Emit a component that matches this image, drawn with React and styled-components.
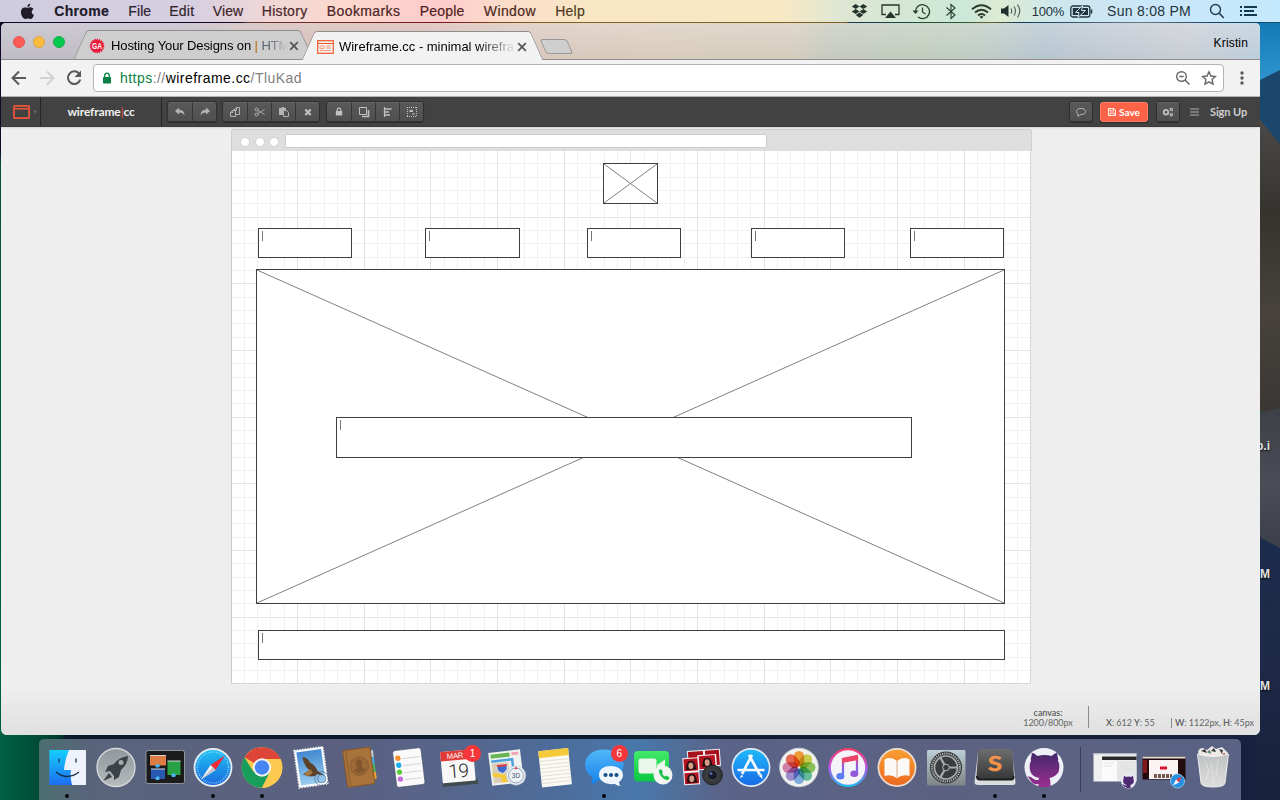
import React from "react";
import styled, { createGlobalStyle, css } from "styled-components";

const Global = createGlobalStyle`
  * { box-sizing: border-box; }
  html, body { margin: 0; padding: 0; }
  body { width: 1280px; height: 800px; overflow: hidden; }
  svg { display: block; flex: none; }
`;

const helvetica = `"Liberation Sans", Arial, sans-serif`;
const lato = `Lato, sans-serif`;

/* ---------- desktop ---------- */
const Desktop = styled.div`
  position: relative;
  width: 1280px;
  height: 800px;
  overflow: hidden;
  display: flex;
  flex-direction: column;
  font-family: ${helvetica};
  background:
    linear-gradient(90deg, #006042 0, #004b35 40px, #003a2c 60px, rgba(13, 26, 45, 0) 66px) 0 735px / 100% 65px no-repeat,
    linear-gradient(90deg, #0c1929 0, #0d1a2c 600px, #17213d 1200px, #17213d 1280px) 0 735px / 100% 65px no-repeat,
    linear-gradient(180deg, #11082a 0, #11082a 150px, #00523a 165px, #006242 735px);
`;

const Wallpaper = styled.svg`
  position: absolute;
  right: 0;
  top: 22px;
`;

const DesktopLabel = styled.span`
  position: absolute;
  right: ${(p) => p.$right}px;
  top: ${(p) => p.$top}px;
  font-size: 12px;
  line-height: 14px;
  font-weight: bold;
  color: #e2e2e2;
  text-shadow: 0 1px 2px #000;
`;

/* ---------- menu bar ---------- */
const MenuBar = styled.header`
  position: relative;
  height: 23px;
  flex: none;
  display: flex;
  align-items: center;
  justify-content: space-between;
  padding: 0 22px 0 20px;
  color: #1e1b2a;
  border-bottom: 1px solid;
  border-image: linear-gradient(90deg, #11082a 0, #11082a 240px, #6c352c 250px, #7f1418 440px, #80601c 530px, #80601c 845px, #0b3a5a 850px, #245c2c 960px, #6a682a 990px, #0b3a64 1020px, #6c7a88 1140px, #12496b 1210px, #12496b 1280px) 1;
  background: linear-gradient(90deg, #cfccdf 0, #d6cfe0 190px, #f0d7d6 270px, #fbd9cd 340px, #fecbcb 440px, #fbdccb 500px, #f9e6c5 580px, #f8e9c4 780px, #dfe6d3 840px, #d2e8d5 920px, #cbe8d9 965px, #dcebd2 1000px, #cde7ee 1060px, #cbe6f8 1150px, #c5e9fd 1280px);
`;
const MenuLeft = styled.nav`
  display: flex;
  align-items: center;
  gap: 18.5px;
  font-size: 14px;
`;
const AppleMark = styled.svg`
  margin-right: 0.8px;
`;
const MenuItem = styled.span`
  width: ${(p) => p.$w}px;
  white-space: nowrap;
  font-weight: ${(p) => (p.$bold ? 700 : 400)};
  color: ${(p) => p.$c};
  letter-spacing: ${(p) => p.$ls || 0}px;
  -webkit-text-stroke: 0.2px currentColor;
`;
const MenuRight = styled.div`
  display: flex;
  align-items: center;
  color: #22333a;
`;
const StatusSlot = styled.span`
  margin-left: ${(p) => p.$gap}px;
  white-space: nowrap;
  font-size: ${(p) => p.$size || 14}px;
  letter-spacing: ${(p) => p.$ls || 0}px;
`;

/* ---------- browser window ---------- */
const Window = styled.main`
  position: relative;
  width: 1259px;
  height: 712px;
  margin-left: 1px;
  flex: none;
  display: flex;
  flex-direction: column;
  border-radius: 5px 5px 6px 6px;
  overflow: hidden;
  background: #eeeeee;
`;
const TabStrip = styled.div`
  height: 37px;
  flex: none;
  display: flex;
  align-items: flex-end;
  border-bottom: 1px solid #908e8e;
  background:
    linear-gradient(180deg, rgba(255, 255, 255, 0.18), rgba(120, 120, 120, 0.04)),
    linear-gradient(95deg, #c2bfca 0, #c4bec9 180px, #d6c0bc 270px, #dcbdb8 420px, #dcc9c1 500px, #dccfbf 640px, #d8cfc0 790px, #c9cdc3 830px, #c4d0c1 920px, #c3cfc8 980px, #bac9d3 1040px, #c7cdd6 1130px, #ccd1d7 1180px, #bfd1df 1259px);
`;
const Lights = styled.div`
  display: flex;
  gap: 8px;
  padding: 0 0 11px 12px;
  width: 72px;
`;
const Light = styled.i`
  width: 12px;
  height: 12px;
  border-radius: 50%;
  background: ${(p) => p.$c};
  border: 1px solid ${(p) => p.$b};
`;
const Tab = styled.div`
  position: relative;
  width: ${(p) => p.$w || 241}px;
  height: 29px;
  margin-left: ${(p) => p.$ml || 0}px;
  margin-bottom: ${(p) => (p.$active ? -1 : 0)}px;
  z-index: ${(p) => (p.$active ? 2 : 1)};
  display: flex;
  align-items: center;
  padding: 2px ${(p) => (p.$active ? 17 : 15)}px 0 16px;
  &::before, &::after {
    content: "";
    position: absolute;
    z-index: -1;
    top: 0;
    bottom: 0;
    background: ${(p) => (p.$active ? "#f2f2f2" : "#cfcecf")};
    border: 0 solid #8f8d8d;
    border-top-width: 1px;
  }
  &::before {
    left: 6.5px;
    right: 50%;
    border-left-width: 1px;
    border-top-left-radius: 3px;
    transform: skewX(-24deg);
  }
  &::after {
    left: 45%;
    right: 6.5px;
    border-right-width: 1px;
    border-top-right-radius: 3px;
    transform: skewX(24deg);
  }
`;
const TabTitle = styled.span`
  flex: 1;
  margin-left: ${(p) => p.$ml}px;
  font-size: 13px;
  letter-spacing: ${(p) => p.$ls}px;
  line-height: 18px;
  white-space: nowrap;
  color: #000;
  mask-image: linear-gradient(90deg, #000 ${(p) => p.$fade}px, transparent 177px);
`;
const Pipe = styled.span`
  color: #b56a10;
`;
const Fade = styled.span`
  color: #5d6572;
`;
const NewTab = styled.div`
  width: 27px;
  height: 15px;
  margin: 0 0 5px -1px;
  transform: skewX(24deg);
  border: 1px solid #9a9896;
  border-radius: 3px;
  background: #cfcfcf;
`;
const Profile = styled.span`
  margin: 0 12px 9px auto;
  font-size: 12px;
  letter-spacing: 0.15px;
  line-height: 14px;
  color: #000;
`;
const NavBar = styled.div`
  height: 37px;
  flex: none;
  display: flex;
  align-items: center;
  background: #f2f2f2;
  border-bottom: 1px solid #b4b4b4;
  padding: 0 11px 0 9px;
`;
const NavIcons = styled.div`
  display: flex;
  gap: 9.7px;
  width: 83px;
`;
const Omnibox = styled.div`
  flex: 1;
  height: 28px;
  border: 1px solid #b3b3b3;
  border-radius: 4px;
  background: #fff;
  display: flex;
  align-items: center;
  padding: 0 6px 0 8px;
`;
const Url = styled.span`
  flex: 1;
  margin-left: 8px;
  font-size: 14px;
  letter-spacing: 0.46px;
  color: #808080;
`;
const Secure = styled.span`
  color: #0b8043;
`;
const Host = styled.span`
  color: #000;
`;
const NavEnd = styled.div`
  display: flex;
  margin-left: 9px;
`;

/* ---------- app toolbar ---------- */
const AppBar = styled.div`
  height: 30px;
  flex: none;
  display: flex;
  align-items: center;
  background: #424242;
  border-bottom: 1px solid #383838;
  font-family: ${lato};
`;
const LogoCell = styled.div`
  width: 40px;
  height: 29px;
  display: flex;
  align-items: center;
  gap: 4px;
  padding-left: 12px;
  border-right: 1px solid #252525;
`;
const Brand = styled.div`
  width: 121px;
  height: 29px;
  line-height: 30px;
  text-align: center;
  font-size: 12px;
  font-weight: 700;
  letter-spacing: -0.15px;
  color: #f0f0f0;
  border-right: 1px solid #252525;
`;
const BrandBar = styled.span`
  color: #e0533b;
  font-weight: 400;
`;
const Group = styled.div`
  display: flex;
  margin-left: ${(p) => p.$ml ?? 6}px;
  height: 21px;
  border: 1px solid #303030;
  border-radius: 3px;
  box-shadow: 0 1px 1px #2d2d2d;
  overflow: hidden;
`;
const ToolButton = styled.div`
  width: ${(p) => p.$w || 24}px;
  display: flex;
  align-items: center;
  justify-content: center;
  background: linear-gradient(#585858, #4f4f4f);
  border-top: 1px solid #646464;
  & + & {
    border-left: 1px solid #363636;
  }
`;
const AppRight = styled.div`
  margin-left: auto;
  padding-right: 13px;
  display: flex;
  align-items: center;
`;
const Save = styled.div`
  width: 48px;
  height: 20px;
  margin: 0 2px 0 7px;
  border-radius: 3px;
  background: #ff6347;
  border: 1px solid #ff8068;
  box-shadow: 0 1px 1px #2b2b2b;
  color: #fff;
  font-size: 10px;
  font-weight: 700;
  display: flex;
  align-items: center;
  justify-content: center;
  gap: 3px;
`;
const SignUp = styled.span`
  margin-left: 11px;
  font-size: 11px;
  letter-spacing: -0.1px;
  color: #cfcfcf;
  font-weight: 700;
  width: 37px;
  white-space: nowrap;
`;

/* ---------- workspace ---------- */
const Workspace = styled.section`
  flex: 1;
  display: flex;
  flex-direction: column;
  background: linear-gradient(180deg, #d5d5d5 0, #eeeeee 2px, #eeeeee 560px, #e0e0e0 608px);
  padding-top: 2px;
`;
const Sheet = styled.div`
  width: 801px;
  height: 555px;
  margin-left: 230px;
  flex: none;
`;
const SheetHeader = styled.div`
  height: 22px;
  display: flex;
  align-items: center;
  padding: 1px 0 0 8px;
  border: 1px solid #cdcdcd;
  border-bottom: 0;
  border-radius: 3px 3px 0 0;
  background: #dedede;
`;
const Circle = styled.i`
  width: 10px;
  height: 10px;
  margin-top: 1px;
  border-radius: 50%;
  margin-right: 4.6px;
  background: #fff;
  border: 1px solid #d2d2d2;
`;
const Address = styled.div`
  width: 482px;
  height: 14px;
  margin-left: 1px;
  border: 1px solid #cbcbcb;
  border-radius: 2px;
  background: #fff;
`;
const Paper = styled.div`
  position: relative;
  height: 533px;
  width: 800px;
  border: 1px solid #d6d6d6;
  border-top: 0;
  border-left-color: #cacaca;
  background:
    repeating-linear-gradient(90deg, transparent 0, transparent 65.1px, #e2e2e2 65.1px, #e2e2e2 66.1px, transparent 66.1px, transparent 66.667px),
    repeating-linear-gradient(180deg, transparent 0, transparent 65.6px, #e6e6e6 65.6px, #e6e6e6 66.6px, transparent 66.6px, transparent 66.667px),
    repeating-linear-gradient(90deg, transparent 0, transparent 11.8px, #f1f1f1 11.8px, #f1f1f1 12.8px, transparent 12.8px, transparent 13.333px),
    repeating-linear-gradient(180deg, transparent 0, transparent 12.3px, #f1f1f1 12.3px, #f1f1f1 13.3px, transparent 13.3px, transparent 13.333px),
    #fff;
`;
const placed = css`
  position: absolute;
  left: ${(p) => p.$x}px;
  top: ${(p) => p.$y}px;
  width: ${(p) => p.$w}px;
  height: ${(p) => p.$h}px;
  border: 1px solid #3f3f3f;
  background: #fff;
`;
const FieldBox = styled.div`
  ${placed}
  padding: 2px 0 0 3px;
  &::before {
    content: "";
    display: block;
    width: 1px;
    height: 10px;
    background: #777;
  }
`;
const ImageBox = styled.div`
  ${placed}
`;
const Footer = styled.footer`
  flex: 1;
  display: flex;
  justify-content: flex-end;
  align-items: flex-end;
  padding: 0 8px 7px 0;
  font-family: ${lato};
  font-size: 9px;
  letter-spacing: -0.05px;
  line-height: 10px;
  color: #666;
  white-space: nowrap;
`;
const Stat = styled.div`
  width: ${(p) => p.$w}px;
  text-align: ${(p) => p.$align || "left"};
`;
const Rule = styled.i`
  width: 1px;
  height: ${(p) => p.$h}px;
  margin: ${(p) => p.$m};
  background: #8b8b8b;
`;
const Strong = styled.span`
  font-weight: 600;
  color: #5c5c5c;
`;

/* ---------- dock ---------- */
const Dock = styled.nav`
  position: relative;
  width: 1202px;
  height: 61px;
  margin: 4px 0 0 39px;
  padding-left: 3.4px;
  flex: none;
  display: flex;
  border-radius: 5px 5px 0 0;
  background: linear-gradient(90deg, #4a6f6f 0, #59647c 50px, #5b6080 300px, #57658a 400px, #4e6c9a 510px, #4878ab 600px, #5a6488 680px, #5c6181 900px, #5a6384 1202px);
`;
const DockItem = styled.div`
  position: relative;
  width: 48.85px;
  height: 61px;
  flex: none;
  display: flex;
  flex-direction: column;
  align-items: center;
  padding-top: 4px;
  &::after {
    content: "";
    display: ${(p) => (p.$running ? "block" : "none")};
    width: 4px;
    height: 4px;
    margin-top: 3px;
    border-radius: 50%;
    background: #05060c;
  }
`;
const DockRule = styled.i`
  width: 1px;
  height: 45px;
  margin: 8px 10px 0 11.5px;
  background: #35405f;
`;
const Badge = styled.span`
  position: absolute;
  left: ${(p) => p.$x}px;
  top: 6px;
  width: 17px;
  height: 17px;
  border-radius: 50%;
  background: #f5373b;
  color: #fff;
  font-size: 10px;
  line-height: 17px;
  text-align: center;
`;

const Icon = ({ w = 16, h, vb, children, ...rest }) => (
  <svg width={w} height={h || w} viewBox={vb || `0 0 ${w} ${h || w}`} fill="none" {...rest}>
    {children}
  </svg>
);

const CAT =
  "M-13 -14C-13 -18 -12 -18 -7 -14Q0 -16 7 -14C12 -18 13 -18 13 -14Q14 -11 13.500 -9Q16 -5 14 2Q11 7 5 8Q6 9 6 17H-6V14C-13 16 -14 8 -17 7C-14 5 -11 11 -6 10Q-6 8 -5 8Q-12 7 -14 2Q-16 -5 -13.500 -9Q-14 -12 -13 -14Z";

const icons = {
  finder: (
    <>
      <rect x="6.300" y="7" width="36.700" height="35" fill="url(#gFinder)" />
      <path d="M43 7H26Q22 16 21 27H28Q27 34 29 42H43Z" fill="#eef2fa" />
      <path d="M16 15.500V19.500M33 15.500V19.500" stroke="#173753" strokeWidth="1.300" />
      <path d="M13 29Q24 38 36 29" stroke="#152c44" strokeWidth="1.300" />
    </>
  ),
  launch: (
    <>
      <circle cx="24" cy="24.500" r="19" fill="url(#gGray)" stroke="#d8dcde" strokeWidth="1.300" />
      <path d="M36 13Q27 14 22 21L16 23L13 29L18 28L22 33L22 37L27 34L29 27Q36 21 36 13Z" fill="#3d4246" />
      <circle cx="29" cy="19.500" r="2.500" fill="#a4a9ac" />
      <path d="M17 30L11 38L20 34" fill="#3d4246" />
    </>
  ),
  mission: (
    <>
      <rect x="5" y="7.500" width="38.500" height="33" rx="2" fill="#1b1b1c" stroke="#8e97a0" />
      <rect x="9" y="12.500" width="16" height="10" fill="#de7d43" />
      <rect x="10" y="26" width="14" height="10" fill="#2858b1" />
      <rect x="26.500" y="18" width="13" height="14" fill="#28a146" />
      <path d="M9 12.500H25M10 26H24M26.500 18H39.500" stroke="#d3d6d8" />
      <path d="M17 20.500l2 2-1 2h-3l-1-2zM17 33l2 2-1 2h-3l-1-2zM33 30l2 2-1 2h-3l-1-2z" fill="#4bb3f5" />
    </>
  ),
  safari: (
    <>
      <circle cx="24" cy="24.500" r="18.500" fill="url(#gSafari)" stroke="#e5eaf0" strokeWidth="1.800" />
      <circle cx="24" cy="24.500" r="15.500" stroke="#a9e2ff" strokeWidth="1.600" strokeDasharray=".6 1.400" />
      <path d="M36 12.500L21.500 22L26.500 27Z" fill="#f22a36" />
      <path d="M12 36.500L21.500 22L26.500 27Z" fill="#f4f4f4" />
      <path d="M26.500 27L24 24.500L12 36.500Z" fill="#c0c4ca" />
    </>
  ),
  chrome: (
    <>
      <circle cx="24" cy="24.500" r="20.300" fill="#fdc94e" />
      <path d="M24 24.500L6.420 14.350A20.300 20.300 0 0 1 42.500 16H24Z" fill="#dc4537" />
      <path d="M6.420 14.350A20.300 20.300 0 0 0 24 44.800L32 29L24 24L15 28Z" fill="#169e5a" />
      <path d="M42.500 16A20.300 20.300 0 0 1 24 44.800L32 29L31 17Z" fill="#fdc94e" />
      <circle cx="24" cy="24.500" r="9.200" fill="#f1f1f1" />
      <circle cx="24" cy="24.500" r="7.200" fill="#4684f2" />
    </>
  ),
  mail: (
    <g transform="rotate(-8 24 24)">
      <rect x="9.500" y="5.500" width="29" height="37.500" fill="#fff" stroke="#f0f3f5" strokeWidth="1.700" strokeDasharray="1.400 1.300" />
      <rect x="11.500" y="7.500" width="25" height="33.500" fill="url(#gMail)" />
      <path d="M17 13Q22 14 24 20Q28 22 30 29L36 34L29 32Q24 36 15 30L22 27Q17 22 17 13Z" fill="#5c4129" />
      <path d="M16 30L23 26L25 30L20 33Z" fill="#a37743" />
      <circle cx="33" cy="37" r="7" stroke="#3b506f" strokeWidth=".9" opacity=".6" />
      <circle cx="33" cy="37" r="4" stroke="#3b506f" strokeWidth=".9" opacity=".6" />
    </g>
  ),
  contacts: (
    <g transform="rotate(-8 24 24)">
      <path d="M34 9H39V16H34Z" fill="#c4d1dc" />
      <path d="M34 16H39V23H34Z" fill="#41aede" />
      <path d="M34 23H39V31H34Z" fill="#4bb75c" />
      <path d="M34 31H39V38H34Z" fill="#efa231" />
      <rect x="9" y="5.500" width="27.500" height="37" rx="1.500" fill="#a8733a" stroke="#87572a" />
      <path d="M12 6V42" stroke="#8c5e32" />
      <circle cx="23.500" cy="23" r="9" fill="#9c6a37" stroke="#8a5c2e" />
      <path d="M23.500 16a3.500 4 0 0 1 2 7q0 2 4 4q-6 6-12 0q4-2 4-4a3.500 4 0 0 1 2-7" fill="#83562d" />
    </g>
  ),
  reminders: (
    <g transform="rotate(-7 24 24)">
      <rect x="9.500" y="6" width="28.500" height="37" rx="2.500" fill="#fafafa" stroke="#3f4c64" strokeWidth=".6" />
      <path d="M18 15H36M18 22H36M18 29H36M18 36H36" stroke="#d6d6d6" />
      <circle cx="14" cy="14" r="2.700" fill="#f6902b" />
      <circle cx="14" cy="21" r="2.700" fill="#19adf5" />
      <circle cx="14" cy="28" r="2.700" fill="#5acb3c" />
      <circle cx="14" cy="35" r="2.700" fill="#c56ddd" />
    </g>
  ),
  calendar: (
    <g transform="rotate(-5 24 24)">
      <path d="M8 37H42L43 42.500H7Z" fill="#404b50" />
      <rect x="7.500" y="7.500" width="33" height="31.500" rx="1" fill="#f8f8f8" />
      <path d="M7.500 8.500Q7.500 7.500 8.500 7.500H39.500Q40.500 7.500 40.500 8.500V17H7.500Z" fill="#e23b37" />
      <text x="22" y="15" fill="#fff" fontSize="7.500" textAnchor="middle" fontFamily="Liberation Sans, sans-serif">MAR</text>
      <text x="24" y="34.500" fill="#292929" fontSize="19" fontWeight="300" textAnchor="middle" letterSpacing="-.6" fontFamily="Roboto, sans-serif">19</text>
    </g>
  ),
  maps: (
    <>
      <g transform="rotate(-7 24 24)">
        <rect x="8" y="8" width="32" height="33" fill="#f0f3ed" />
        <path d="M10 10H29V14H10Z" fill="#68b455" />
        <path d="M31 10H38V13H31Z" fill="#efa9b6" />
        <path d="M10 19H27V39H10Z" fill="#d9cfb8" />
        <path d="M10 17H31V33" stroke="#4ea1df" strokeWidth="2.500" />
        <path d="M10 28L24 32L25 39H18V34L10 32Z" fill="#f7c939" />
        <path d="M15 21H25V26Q23 29 20 30Q17 29 15 26Z" fill="#3c6bcd" stroke="#fff" strokeWidth=".6" />
        <path d="M15 22H25" stroke="#e63c36" strokeWidth="2" />
      </g>
      <circle cx="34" cy="32.500" r="9.700" fill="#edf0f4" stroke="#bac2cc" strokeWidth=".6" />
      <circle cx="34" cy="32.500" r="7.500" stroke="#7d93a8" strokeWidth=".8" />
      <path d="M34 23.500l1.500 2.500h-3z" fill="#db302b" />
      <text x="34" y="35" fill="#44566c" fontSize="6.500" textAnchor="middle" fontFamily="Liberation Sans, sans-serif">3D</text>
    </>
  ),
  notes: (
    <g transform="rotate(-6 24 24)">
      <rect x="9" y="6.500" width="30" height="36.500" fill="#faf9f3" />
      <path d="M9 6.500H39V13.500H9Z" fill="#f6c93b" />
      <path d="M9 17H39M9 20.700H39M9 24.400H39M9 28.100H39M9 31.800H39M9 35.500H39M9 39.200H39" stroke="#d9d7cc" strokeWidth=".7" />
    </g>
  ),
  messages: (
    <>
      <path d="M24 6.500C35 6.500 43.500 13 43.500 22S35 38 24 38Q20 38 18 37Q15 41 11 42Q13 38 12 34Q5 29 5 22C5 13 13 6.500 24 6.500Z" fill="url(#gBlue)" />
      <path d="M31 23C38 23 43 27 43 32Q43 36 39 39Q39 42 41 43Q37 43 35 41C26 42 19 38 19 32S24 23 31 23Z" fill="#edf6fc" />
      <circle cx="25.500" cy="32" r="2.100" fill="#194f88" />
      <circle cx="31" cy="32" r="2.100" fill="#194f88" />
      <circle cx="36.500" cy="32" r="2.100" fill="#194f88" />
    </>
  ),
  facetime: (
    <>
      <rect x="5" y="8" width="35" height="30.500" rx="4" fill="url(#gGreen)" />
      <rect x="9.500" y="15.500" width="18" height="15" rx="2.500" fill="#eaf6ea" />
      <path d="M28 22L36 16.500V30L28 25Z" fill="#eaf6ea" />
      <circle cx="34" cy="32" r="9.500" fill="#f3f5f3" />
      <path d="M30 27l2-1 2 3-1 1.500q1 2 3 3l1.500-1 3 2-1 2.200q-3 1-6-2-4-4-3.500-7.700Z" fill="#1bc24b" />
    </>
  ),
  booth: (
    <>
      <g transform="rotate(-4 24 24)">
        <path d="M10 7H43V24H10Z" fill="#f2f2f2" />
        <path d="M11 8H26V20H11ZM28 8H42V23H28Z" fill="#a60f1c" />
        <path d="M5 14H21V41H5Z" fill="#f4f4f4" />
        <path d="M20 12H39V27H20Z" fill="#f4f4f4" />
        <path d="M6 15H20V27H6ZM6 29H20V40H6ZM21.500 13H37.500V26H21.500Z" fill="#b51321" />
        {[[13, 22], [13, 35], [29.500, 20]].map(([x, y]) => (
          <g key={x + "-" + y}>
            <path d={`M${x - 5} ${y + 4}Q${x - 5} ${y - 5} ${x} ${y - 5}T${x + 5} ${y + 4}Z`} fill="#221014" />
            <ellipse cx={x} cy={y} rx="2.500" ry="3.300" fill="#d69a85" />
          </g>
        ))}
      </g>
      <circle cx="34.500" cy="32" r="9.800" fill="#38393c" stroke="#1e1f20" />
      <circle cx="34.500" cy="32" r="5" fill="#171a27" stroke="#4c5058" />
      <circle cx="33" cy="30.500" r="1.500" fill="#5463a2" />
    </>
  ),
  store: (
    <>
      <circle cx="24" cy="24.500" r="18.600" fill="url(#gStore)" stroke="#dfe9f2" strokeWidth="1.600" />
      <path d="M25 12L15 31M22 12L33 32M10.500 27H37.500" stroke="#f5faff" strokeWidth="2.700" />
      <path d="M14 32L13 35.500L16.500 33Z" fill="#f5faff" />
      <path d="M32 33L35.500 36L35 31Z" fill="#f5faff" />
    </>
  ),
  photos: (
    <g style={{ isolation: "isolate" }}>
      <circle cx="24" cy="24.500" r="19.300" fill="#f0f1ef" stroke="#d8dadb" strokeWidth=".8" />
      {["#f9a43a", "#d5d851", "#93cb62", "#6cc6a6", "#82b5ea", "#a793d8", "#dd86b4", "#f2705a"].map((c, i) => (
        <rect key={c} x="18.800" y="8" width="10.400" height="15.500" rx="5.200" fill={c} transform={`rotate(${i * 45} 24 24.500)`} style={{ mixBlendMode: "multiply" }} />
      ))}
    </g>
  ),
  itunes: (
    <>
      <circle cx="24" cy="24.500" r="18.400" fill="#f3f3f8" stroke="url(#gTunes)" strokeWidth="2.400" />
      <path d="M19 33V16L33 13V30" stroke="url(#gNote)" strokeWidth="2.200" />
      <path d="M18 15.500L34 12V17L18 20Z" fill="#ee4468" />
      <ellipse cx="16.300" cy="33.300" rx="4" ry="3.300" fill="#5a7cf0" />
      <ellipse cx="30.300" cy="30.800" rx="4" ry="3.300" fill="#9459dd" />
    </>
  ),
  books: (
    <>
      <circle cx="24" cy="24.500" r="18.600" fill="url(#gBooks)" stroke="#eadcd2" strokeWidth="1.700" />
      <path d="M24 18Q18 13 11.500 16.500V33Q18 31 24 35Q30 31 36.500 33V16.500Q30 13 24 18Z" fill="#fcf8f5" />
      <path d="M24 18V34" stroke="#dea981" />
    </>
  ),
  prefs: (
    <>
      <rect x="5" y="7" width="38.500" height="35.500" rx="1.500" fill="url(#gPrefs)" />
      <circle cx="24" cy="24.500" r="16" fill="#393b3d" />
      <circle cx="24" cy="24.500" r="14" stroke="#b9bcbd" strokeWidth="2" strokeDasharray="1.100 1.100" />
      <circle cx="24" cy="24.500" r="11.500" stroke="#a9adb0" strokeWidth="1.700" />
      <path d="M24 24.500L18 14M24 24.500L18 35M24 24.500H36" stroke="#a9adb0" strokeWidth="2.200" />
      <circle cx="24" cy="24.500" r="3.300" fill="#3b3e40" stroke="#b5b8b9" />
    </>
  ),
  sublime: (
    <>
      <path d="M7 9L3.500 39Q3.500 42 7 42H42Q45 42 44.500 39L41 9Z" fill="#dbdcdd" />
      <path d="M10 6H38Q41 6 41.500 10L43 33Q43 37 40 37H8Q5 37 5.500 33L7 10Q7.500 6 10 6Z" fill="url(#gDark)" />
      <path d="M6 33Q6 36.500 9 36.500H40Q43 36.500 42.500 33" stroke="#1c1d1e" strokeWidth="2" />
      <text x="24" y="27.500" fill="#f4944b" stroke="#f4944b" strokeWidth=".6" fontSize="21" fontWeight="700" textAnchor="middle" textLength="14" lengthAdjust="spacingAndGlyphs" fontFamily="Lato, sans-serif">S</text>
    </>
  ),
  github: (
    <>
      <circle cx="24" cy="24.500" r="19.500" fill="#eef0f8" />
      <path d={CAT} transform="translate(24.500 27)" fill="url(#gCat)" />
    </>
  ),
  win1: (
    <>
      <rect x="2.500" y="10.500" width="43" height="28" fill="#f0f0f0" />
      <path d="M2.500 11H45.500" stroke="#ccc" />
      <path d="M11 13.500H45.500V17H11Z" fill="#2a2a2c" />
      <path d="M11 18H26V38H11Z" fill="#fafafa" />
      <path d="M26 18H45.500V38H26Z" fill="#e4e5e5" />
      <path d="M13 20H23M13 23H21M30 25H36" stroke="#dedede" strokeWidth=".8" />
      <circle cx="37.500" cy="38" r="7.500" fill="#e8e9f4" />
      <path d={CAT} transform="translate(37.500 39) scale(.36)" fill="#4f2a72" />
    </>
  ),
  win2: (
    <>
      <rect x="2.500" y="13" width="43" height="23.500" fill="#230a0c" />
      <path d="M2.500 14.500H45.500" stroke="#dcdcdc" strokeWidth="2" />
      <path d="M9 17H38V36H9Z" fill="#f9f4f3" />
      <path d="M3 17H7V30H3Z" fill="#811718" />
      <path d="M20 25H27" stroke="#d8122e" strokeWidth="3" />
      <path d="M14 33H32" stroke="#765850" strokeWidth="4" strokeDasharray="3 1" />
      <circle cx="37.500" cy="38" r="7" fill="#2492e3" stroke="#8dbbe0" />
      <path d="M42 33.500L36 36.500L39 39.500Z" fill="#ec3a43" />
      <path d="M33 42.500L36 36.500L39 39.500Z" fill="#fff" />
    </>
  ),
  trash: (
    <>
      <path d="M9 9Q10 5 14 5L18 7L23 3L27 6L33 4L37 8L39 10L36 14H11Z" fill="#ece9e7" />
      <path d="M12 8l4-2 2 4zM22 8l3-3 2 4zM30 6l4 1-1 4z" fill="#34373b" />
      <path d="M18 9l3-2 1 4zM33 11l3-1v3z" fill="#a5523a" />
      <path d="M20 7l2 3h-3z" fill="#36a38d" />
      <path d="M8.500 11Q24 16 39.500 11L36 40Q35.500 44 24 44T12 40Z" fill="url(#gTrash)" stroke="#f3f3f3" strokeWidth=".9" />
      <path d="M16 18L20 28L17 37M29 17L27 30L32 38M22 19L25 40" stroke="#fff" opacity=".35" />
    </>
  ),
};

const Grad = ({ id, stops }) => (
  <linearGradient id={id} x1="0" y1="0" x2="0" y2="1">
    {stops.map((c, i) => (
      <stop key={i} offset={i / (stops.length - 1)} stopColor={c} />
    ))}
  </linearGradient>
);

const Defs = styled.svg`
  position: absolute;
`;

const dockApps = [
  ["finder", true], ["launch"], ["mission"], ["safari", true], ["chrome", true], ["mail"], ["contacts"],
  ["reminders"], ["calendar", false, "1", 31], ["maps"], ["notes"], ["messages", true, "6", 31], ["facetime"], ["booth"],
  ["store"], ["photos"], ["itunes"], ["books"], ["prefs"], ["sublime", true], ["github", true],
];

const DockIcon = ({ name, running, badge, badgeX }) => (
  <DockItem $running={running}>
    <Icon w={48}>{icons[name]}</Icon>
    {badge && <Badge $x={badgeX}>{badge}</Badge>}
  </DockItem>
);

const menu = [
  ["Chrome", 55.5, "#1e1b2a", true, 0.3],
  ["File", 22.5, "#2a2230", false, 0.1],
  ["Edit", 25, "#33242c", false, 0.2],
  ["View", 30.5, "#3c2429", false, 0.1],
  ["History", 46.500, "#47262a", false, 0.3],
  ["Bookmarks", 74.5, "#4d2426", false, 0.4],
  ["People", 45.5, "#4d1d20", false, 0.2],
  ["Window", 53, "#4f2a1f", false, 0.4],
  ["Help", 30, "#4d3a1c", false, 0.2],
];

const toolStroke = { stroke: "#b4b4b4", strokeWidth: 1 };
const toolGroups = [
  [
    <path d="M1 5L5 1.500V3.700Q10.500 3.700 10.500 9.500Q9 6.500 5 6.500V8.500Z" fill="#b4b4b4" />,
    <path d="M11 5L7 1.500V3.700Q1.500 3.700 1.500 9.500Q3 6.500 7 6.500V8.500Z" fill="#b4b4b4" />,
  ],
  [
    <g {...toolStroke}>
      <path d="M5 4L7.500 1.500H10.500V8.500H6.500" />
      <path d="M1.500 6.500L4 4H6.500V10.500H1.500Z" />
      <path d="M7.500 1.500V4.500H5M4 4V6.500H1.500" />
    </g>,
    <g {...toolStroke}>
      <circle cx="2.500" cy="3.500" r="1.500" />
      <circle cx="2.500" cy="8.500" r="1.500" />
      <path d="M3.800 4.300L10.500 8.500M3.800 7.700L10.500 3.500" strokeDasharray="2.500 .5" />
    </g>,
    <g>
      <path d="M1 2H3.500V1H6V2H8V4H5V9H1Z" fill="#b4b4b4" />
      <path d="M5.500 4.500H8.500L10.500 6.500V10.500H5.500Z" stroke="#b4b4b4" />
    </g>,
    <path d="M3.300 3.500L8.700 9M8.700 3.500L3.300 9" stroke="#c0c0c0" strokeWidth="2.200" />,
  ],
  [
    <g>
      <rect x="2.800" y="5" width="6.400" height="4.500" rx=".5" fill="#c0c0c0" />
      <path d="M4.200 5.500V4Q4.200 2.200 6 2.200T7.800 4V5.500" stroke="#c0c0c0" strokeWidth="1.200" />
    </g>,
    <g>
      <path d="M1.500 1.500H8.500V8.500H1.500Z" stroke="#c0c0c0" />
      <path d="M10.500 4V10.500H4" stroke="#c0c0c0" strokeWidth="1.700" />
    </g>,
    <path d="M2.500 1V11M3 3H9.500M3 6H7M3 9H8" stroke="#c0c0c0" strokeWidth="1.300" />,
    <g stroke="#c0c0c0">
      <path d="M1 1.500H11M1 10.500H11M1.500 1V11M10.500 1V11" strokeDasharray="1 1" />
      <path d="M3.500 5H7" strokeWidth="2" />
      <path d="M6 8H9" strokeWidth="1" />
    </g>,
  ],
];

const fields = [
  [26, 77, 94, 30],
  [193, 77, 95, 30],
  [355, 77, 94, 30],
  [519, 77, 94, 30],
  [678, 77, 94, 30],
  [104, 266, 576, 41],
  [26, 479, 747, 30],
];

const Crossed = ({ x, y, w, h }) => (
  <ImageBox $x={x} $y={y} $w={w} $h={h}>
    <Icon w={w - 2} h={h - 2}>
      <path d={`M0 0L${w - 2} ${h - 2}M${w - 2} 0L0 ${h - 2}`} stroke="#808080" />
    </Icon>
  </ImageBox>
);

export default function App() {
  return (
    <Desktop>
      <Global />
      <Defs width="0" height="0">
        <Grad id="gFinder" stops={["#15cffd", "#1c6df0"]} />
        <Grad id="gGray" stops={["#8f989c", "#b6babd"]} />
        <Grad id="gSafari" stops={["#20c3f5", "#1a68dc"]} />
        <Grad id="gMail" stops={["#4088cf", "#9bcdf0"]} />
        <Grad id="gBlue" stops={["#52b8f9", "#1480ea"]} />
        <Grad id="gGreen" stops={["#42ea68", "#0bc741"]} />
        <Grad id="gStore" stops={["#20bafb", "#1868e6"]} />
        <Grad id="gTunes" stops={["#f43c72", "#b856e2", "#25b9f3"]} />
        <Grad id="gNote" stops={["#f04463", "#9a5be0", "#5a7cf0"]} />
        <Grad id="gBooks" stops={["#faa032", "#ec6820"]} />
        <Grad id="gPrefs" stops={["#bdcfd7", "#7f8486"]} />
        <Grad id="gDark" stops={["#6d6d6d", "#353637"]} />
        <Grad id="gCat" stops={["#44286b", "#9b2f90"]} />
        <Grad id="gTrash" stops={["#bfc1c2", "#dddddd"]} />
      </Defs>
      <Wallpaper width="24" height="778" viewBox="0 0 24 778">
        <defs>
          <Grad id="sky" stops={["#147ab4", "#2088c4", "#3295ce"]} />
          <Grad id="rock" stops={["#4b4a48", "#36332f", "#47423d", "#3b3734"]} />
          <Grad id="slate" stops={["#3e4047", "#4b4d57", "#383c48"]} />
          <Grad id="navy" stops={["#1c2c4c", "#1d2946", "#17213b"]} />
        </defs>
        <path d="M0 0H24V60H0Z" fill="url(#sky)" />
        <path d="M0 60L24 48V140H0Z" fill="#1a476b" />
        <path d="M0 92L10 105L24 122V390H0Z" fill="url(#rock)" />
        <path d="M0 392L24 386V540H0Z" fill="url(#slate)" />
        <path d="M0 513L24 526V778H0Z" fill="url(#navy)" />
      </Wallpaper>
      <DesktopLabel $right={10} $top={439}>p.i</DesktopLabel>
      <DesktopLabel $right={10} $top={567}>M</DesktopLabel>
      <DesktopLabel $right={10} $top={679}>M</DesktopLabel>

      <MenuBar>
        <MenuLeft>
          <AppleMark width="15" height="17" viewBox="0 0 15 17">
            <path d="M10.300 .5C10.500 2.300 9 4.200 7.300 4.200C7.100 2.400 8.600 .8 10.300 .5ZM7.500 5C8.200 5 9 4.300 10.400 4.300Q12.500 4.400 13.600 6C10.900 7.600 11.300 11 14 12Q12.500 16 10.700 16C9.600 16 9.200 15.400 7.900 15.400S6.100 16 5.100 16C3.200 16 1 12.500 1 9.300C1 4.500 4.800 3.900 7.500 5Z" fill="#1f1b29" />
          </AppleMark>
          {menu.map(([label, w, c, bold, ls]) => (
            <MenuItem key={label} $w={w} $c={c} $bold={bold} $ls={ls}>{label}</MenuItem>
          ))}
        </MenuLeft>
        <MenuRight>
          <Icon w={17} h={16}>
            <path d="M4.700 1L.8 3.500L4.700 6L8.500 3.500ZM12.300 1L8.500 3.500L12.300 6L16.200 3.500ZM.8 8.500L4.700 6L8.500 8.500L4.700 11ZM16.200 8.500L12.300 6L8.500 8.500L12.300 11ZM4.700 12L8.500 9.500L12.300 12L8.500 14.800Z" fill="#26352e" />
          </Icon>
          <StatusSlot $gap={13}>
            <Icon w={19} h={15}>
              <path d="M5 10.500H1V1H18V10.500H14" stroke="#26352e" strokeWidth="1.300" />
              <path d="M9.500 7.500L15 14H4Z" fill="#26352e" />
            </Icon>
          </StatusSlot>
          <StatusSlot $gap={12}>
            <Icon w={19} h={17}>
              <path d="M3.500 9A7 7 0 1 1 6 14" stroke="#26402e" strokeWidth="1.300" />
              <path d="M.5 7.500H6.500L3.500 11Z" fill="#26402e" />
              <path d="M10.500 4.500V9L13.500 11" stroke="#26402e" strokeWidth="1.200" />
            </Icon>
          </StatusSlot>
          <StatusSlot $gap={14}>
            <Icon w={12} h={17}>
              <path d="M1.500 4.500L10 12L6 15.500V1.500L10 5L1.500 12.500" stroke="#26402e" strokeWidth="1.100" />
            </Icon>
          </StatusSlot>
          <StatusSlot $gap={14}>
            <Icon w={21} h={15}>
              <path d="M1 5.300Q10.500 -3 20 5.300M4 8.500Q10.500 2.800 17 8.500M7 11.500Q10.500 8.300 14 11.500" stroke="#2b3a2c" strokeWidth="1.900" />
              <path d="M8.500 12.800Q10.500 11 12.500 12.800L10.500 14.800Z" fill="#2b3a2c" />
            </Icon>
          </StatusSlot>
          <StatusSlot $gap={8}>
            <Icon w={22} h={16}>
              <path d="M1 5.500H4L8.500 2V14L4 10.500H1Z" fill="#20302d" />
              <path d="M11 5.500Q12.500 8 11 10.500M14 3.500Q17 8 14 12.500M17.500 1.500Q22 8 17.500 14.500" stroke="#52645f" strokeWidth="1.200" />
            </Icon>
          </StatusSlot>
          <StatusSlot $gap={10} $size={13} $ls={-0.2}>100%</StatusSlot>
          <StatusSlot $gap={6}>
            <Icon w={23} h={13}>
              <rect x=".8" y="1" width="19" height="11" rx="2" stroke="#203442" strokeWidth="1.300" />
              <path d="M2.800 3H18V10H2.800Z" fill="#203442" />
              <path d="M12.500 .5L5.500 7.500H9L8 12.500L15.500 5.500H11.500Z" fill="#203442" stroke="#cbe6f2" strokeWidth="1" />
              <path d="M21.500 4.500V8.500" stroke="#203442" strokeWidth="1.600" />
            </Icon>
          </StatusSlot>
          <StatusSlot $gap={14} $ls={0.27}>Sun 8:08 PM</StatusSlot>
          <StatusSlot $gap={18}>
            <Icon w={16}>
              <circle cx="6.500" cy="6.500" r="5" stroke="#1e3e50" strokeWidth="1.400" />
              <path d="M10.300 10.300L14.800 15" stroke="#1e3e50" strokeWidth="1.600" />
            </Icon>
          </StatusSlot>
          <StatusSlot $gap={14}>
            <Icon w={19} h={12}>
              <path d="M5 2H18M5 6H15M5 10H18" stroke="#133b50" strokeWidth="1.900" />
              <path d="M1 2H3M1 6H3M1 10H3" stroke="#133b50" strokeWidth="1.900" />
            </Icon>
          </StatusSlot>
        </MenuRight>
      </MenuBar>

      <Window>
        <TabStrip>
          <Lights>
            <Light $c="#fc5b57" $b="#e2504f" />
            <Light $c="#fdbc40" $b="#e0a545" />
            <Light $c="#00c94f" $b="#19ac48" />
          </Lights>
          <Tab>
            <Icon w={16}>
              <circle cx="8" cy="8" r="6.300" fill="#e91b3c" stroke="#e91b3c" strokeWidth="2" strokeDasharray="1.400 .8" />
              <text x="8" y="11.300" fill="#fff" fontSize="8.500" fontWeight="700" textAnchor="middle" textLength="10" lengthAdjust="spacingAndGlyphs" fontFamily="Liberation Sans, sans-serif">GA</text>
            </Icon>
            <TabTitle $ml={6} $fade={158} $ls={-0.1}>
              Hosting Your Designs on <Pipe>|</Pipe> <Fade>HTM</Fade>
            </TabTitle>
            <Icon w={10}><path d="M1.200 1.200L8.800 8.800M8.800 1.200L1.200 8.800" stroke="#555" strokeWidth="1.700" /></Icon>
          </Tab>
          <Tab $active $ml={-13} $w={243}>
            <Icon w={17} h={14}>
              <rect x=".7" y=".7" width="15.600" height="12.600" stroke="#f1592a" strokeWidth="1.200" />
              <path d="M1 3.500H16" stroke="#f1592a" strokeWidth="1.200" />
              <path d="M3 6H7V8.500H3ZM9 6H14M9 8H14M3 10.500H14" stroke="#f5916f" strokeWidth=".9" />
            </Icon>
            <TabTitle $ml={5} $fade={138} $ls={-0.02}>Wireframe.cc - minimal wirefra</TabTitle>
            <Icon w={10}><path d="M1.200 1.200L8.800 8.800M8.800 1.200L1.200 8.800" stroke="#555" strokeWidth="1.700" /></Icon>
          </Tab>
          <NewTab />
          <Profile>Kristin</Profile>
        </TabStrip>
        <NavBar>
          <NavIcons>
            <Icon w={18}><path d="M16 9H2.500M9 2.500L2.500 9L9 15.500" stroke="#5a5a5a" strokeWidth="2" /></Icon>
            <Icon w={18}><path d="M2 9H15.500M9 2.500L15.500 9L9 15.500" stroke="#d2d2d2" strokeWidth="2" /></Icon>
            <Icon w={18}>
              <path d="M14 4.500A6.300 6.300 0 1 0 15.300 10.500" stroke="#5a5a5a" strokeWidth="2" />
              <path d="M16 1.500V8H9.500Z" fill="#5a5a5a" />
            </Icon>
          </NavIcons>
          <Omnibox>
            <Icon w={10} h={12}>
              <rect x="1" y="5" width="8" height="6.500" rx=".7" fill="#0b8043" />
              <path d="M2.700 5.500V3.500Q2.700 1.200 5 1.200T7.300 3.500V5.500" stroke="#0b8043" strokeWidth="1.300" />
            </Icon>
            <Url><Secure>https</Secure>://<Host>wireframe.cc</Host>/TluKad</Url>
            <Icon w={18}>
              <circle cx="7.500" cy="7.500" r="4.800" stroke="#666" strokeWidth="1.400" />
              <path d="M11 11L15.500 15.500M5.300 7.500H9.700" stroke="#666" strokeWidth="1.500" />
            </Icon>
            <NavEnd>
              <Icon w={16}>
                <path d="M8 1.800L9.900 6L14.500 6.500L11.100 9.600L12 14.100L8 11.800L4 14.100L4.900 9.600L1.500 6.500L6.100 6Z" stroke="#666" strokeWidth="1.400" />
              </Icon>
            </NavEnd>
          </Omnibox>
          <NavEnd>
            <Icon w={16}>
              <circle cx="9" cy="3" r="1.700" fill="#5a5a5a" />
              <circle cx="9" cy="8" r="1.700" fill="#5a5a5a" />
              <circle cx="9" cy="13" r="1.700" fill="#5a5a5a" />
            </Icon>
          </NavEnd>
        </NavBar>

        <AppBar>
          <LogoCell>
            <Icon w={17} h={14}>
              <rect x=".9" y=".9" width="15.200" height="12.200" rx="1" stroke="#f0543a" strokeWidth="1.700" />
              <path d="M1 3.800H16" stroke="#f0543a" strokeWidth="1.500" />
            </Icon>
            <Icon w={3} h={5}><path d="M.5 .5L2.500 2.500L.5 4.500Z" fill="#777" /></Icon>
          </LogoCell>
          <Brand>wireframe<BrandBar>|</BrandBar>cc</Brand>
          {toolGroups.map((group, g) => (
            <Group key={g} $ml={[5, 5, 6][g]}>
              {group.map((glyph, i) => (
                <ToolButton key={i}><Icon w={12}>{glyph}</Icon></ToolButton>
              ))}
            </Group>
          ))}
          <AppRight>
            <Group>
              <ToolButton $w={22}>
                <Icon w={12}><path d="M6 2.500Q10.500 2.500 10.500 5.500T6 8.500Q4 10 2.500 10Q3.500 9 3 8Q1.500 7 1.500 5.500Q1.500 2.500 6 2.500Z" {...toolStroke} /></Icon>
              </ToolButton>
            </Group>
            <Save>
              <Icon w={8}><path d="M.5 .5H6L7.500 2V7.500H.5ZM2 .5V3H5.500V.5M2 7.500V5H6V7.500" stroke="#fff" strokeWidth=".9" /></Icon>
              Save
            </Save>
            <Group>
              <ToolButton $w={22}>
                <Icon w={12}>
                  <circle cx="4" cy="6.200" r="2.300" stroke="#c4c4c4" strokeWidth="1.700" />
                  <circle cx="9.300" cy="3.500" r="1.200" stroke="#c4c4c4" strokeWidth="1.100" />
                  <circle cx="9.300" cy="8.800" r="1.200" stroke="#c4c4c4" strokeWidth="1.100" />
                </Icon>
              </ToolButton>
            </Group>
            <StatusSlot $gap={10}>
              <Icon w={9} h={8}><path d="M0 1H9M0 4H9M0 7H9" stroke="#b0b0b0" /></Icon>
            </StatusSlot>
            <SignUp>Sign Up</SignUp>
          </AppRight>
        </AppBar>

        <Workspace>
          <Sheet>
            <SheetHeader>
              <Circle /><Circle /><Circle />
              <Address />
            </SheetHeader>
            <Paper>
              <Crossed x={371} y={12} w={55} h={41} />
              <Crossed x={24} y={118} w={749} h={335} />
              {fields.map(([x, y, w, h]) => (
                <FieldBox key={`${x}-${y}`} $x={x} $y={y} $w={w} $h={h} />
              ))}
            </Paper>
          </Sheet>
          <Footer>
            <Stat $w={50} $align="center"><Strong>canvas:</Strong><br />1200/800px</Stat>
            <Rule $h={22} $m="0 17px 0 15px" />
            <Stat $w={49}><Strong>X</Strong>: 612 <Strong>Y</Strong>: 55</Stat>
            <Rule $h={10} $m="0 3px 0 16px" />
            <Stat $w={77}><Strong>W</Strong>: 1122px, <Strong>H</Strong>: 45px</Stat>
          </Footer>
        </Workspace>
      </Window>

      <Dock>
        {dockApps.map(([name, running, badge, bx]) => (
          <DockIcon key={name} name={name} running={running} badge={badge} badgeX={bx} />
        ))}
        <DockRule />
        <DockIcon name="win1" />
        <DockIcon name="win2" />
        <DockIcon name="trash" />
      </Dock>
    </Desktop>
  );
}
